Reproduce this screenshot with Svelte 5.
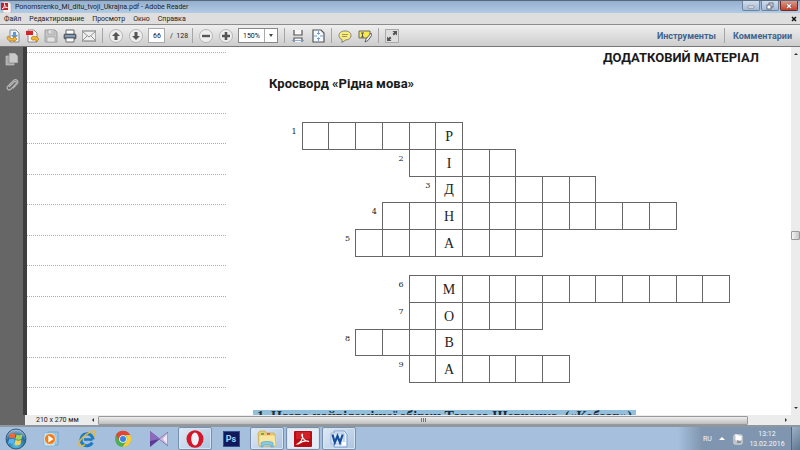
<script lang="ts">
	type Row = { no: number; start: number; length: number; letter: string };

	const keyColumn = 6;

	const blocks: Row[][] = [
		[
			{ no: 1, start: 1, length: 6, letter: 'Р' },
			{ no: 2, start: 5, length: 4, letter: 'І' },
			{ no: 3, start: 6, length: 6, letter: 'Д' },
			{ no: 4, start: 4, length: 11, letter: 'Н' },
			{ no: 5, start: 3, length: 7, letter: 'А' }
		],
		[
			{ no: 6, start: 5, length: 12, letter: 'М' },
			{ no: 7, start: 5, length: 5, letter: 'О' },
			{ no: 8, start: 3, length: 4, letter: 'В' },
			{ no: 9, start: 5, length: 6, letter: 'А' }
		]
	];

	const menu = ['Файл', 'Редактирование', 'Просмотр', 'Окно', 'Справка'];
	const ruledLines = Array.from({ length: 12 });

	let page = $state('66');
	let zoom = $state('150%');
</script>

<svelte:head>
	<title>Ponomsrenko_Mi_ditu_tvoji_Ukrajna.pdf - Adobe Reader</title>
</svelte:head>

<div class="screen">
	<header class="titlebar">
		<svg class="app-icon" viewBox="0 0 11 11">
			<path d="M2 0h6l2 2v9H2z" fill="#f7f1f1" stroke="#a99" stroke-width=".5" />
			<path d="M0 1h7v7H0z" fill="#c3202b" />
			<path d="M1 7c2-1 3-4 2.500-5.500C3 3 5 5.500 6.500 5.500 4.500 5 2 6 1 7z" fill="none" stroke="#fff" stroke-width=".8" />
		</svg>
		<span class="title">Ponomsrenko_Mi_ditu_tvoji_Ukrajna.pdf - Adobe Reader</span>
		<div class="window-buttons">
			<button aria-label="Свернуть">
				<svg viewBox="0 0 10 8"><rect x="2" y="4" width="6" height="2" rx=".5" fill="#fff" stroke="#667" stroke-width=".6" /></svg>
			</button>
			<button aria-label="Восстановить">
				<svg viewBox="0 0 10 8">
					<rect x="4" y="1" width="4" height="4" fill="#dde6f0" stroke="#556" stroke-width=".8" />
					<rect x="2" y="3" width="4" height="4" fill="#fff" stroke="#556" stroke-width=".8" />
				</svg>
			</button>
			<button class="close" aria-label="Закрыть">
				<svg viewBox="0 0 10 8">
					<path d="M3 2l4 4M7 2L3 6" stroke="#633" stroke-width="2.400" />
					<path d="M3 2l4 4M7 2L3 6" stroke="#fff" stroke-width="1.500" />
				</svg>
			</button>
		</div>
	</header>

	<nav class="menubar">
		{#each menu as item}
			<button>{item}</button>
		{/each}
		<button class="close-doc" aria-label="Закрыть документ">
			<svg viewBox="0 0 6 6"><path d="M1 1l4 4M5 1L1 5" stroke="#111" stroke-width="1.500" /></svg>
		</button>
	</nav>

	<div class="toolbar">
		<div class="group files">
			<button aria-label="Открыть">
				<svg viewBox="0 0 14 14">
					<path d="M4 1h6l3 3v9H4z" fill="#e8f1fa" stroke="#777" stroke-width=".8" />
					<path d="M7 3h3v3h2L8.500 10 5 6h2z" fill="#5a9bd8" />
					<path d="M1 8c0 4 4 5 7 3v2l3-3-3-3v2c-2 1-4 1-5-2z" fill="#f2b632" stroke="#a96f10" stroke-width=".6" />
				</svg>
			</button>
			<button aria-label="Создать PDF">
				<svg viewBox="0 0 14 14">
					<path d="M3 1h6l3 3v9H3z" fill="#f5f5f5" stroke="#777" stroke-width=".8" />
					<path d="M1 2h7v4H1z" fill="#d8232a" />
					<path d="M6 9c1-2 3-2 5-1v-1l3 3-3 3v-2H7z" fill="#f2b632" stroke="#a96f10" stroke-width=".6" />
				</svg>
			</button>
			<button aria-label="Сохранить" disabled>
				<svg viewBox="0 0 14 14">
					<path d="M1 1h10l2 2v10H1z" fill="#c4c4c4" stroke="#a0a0a0" />
					<path d="M4 1h6v4H4zM3 8h8v5H3z" fill="#e4e4e4" stroke="#a0a0a0" stroke-width=".7" />
					<path d="M8 2v2" stroke="#999" />
				</svg>
			</button>
			<button aria-label="Печать">
				<svg viewBox="0 0 14 14">
					<path d="M3 1h8v5H3z" fill="#fff" stroke="#555" stroke-width=".9" />
					<rect x="1" y="5" width="12" height="5" rx="1.200" fill="#5f6f80" stroke="#444" stroke-width=".7" />
					<path d="M2 7h10" stroke="#a9c7e5" />
					<path d="M3 9h8v4H3z" fill="#f8fbff" stroke="#555" stroke-width=".8" />
				</svg>
			</button>
			<button aria-label="Отправить">
				<svg viewBox="0 0 14 14">
					<path d="M0 2h14v10H0z" fill="#efefef" stroke="#777" stroke-width="1.200" />
					<path d="M1 3l6 5 6-5M1 11l4-4M13 11L9 7" fill="none" stroke="#888" stroke-width=".9" />
				</svg>
			</button>
		</div>
		<i class="sep"></i>
		<div class="group">
			<button aria-label="Предыдущая страница">
				<svg viewBox="0 0 14 14">
					<circle cx="7" cy="7" r="6.500" fill="#eee" stroke="#aaa" stroke-width=".8" />
					<path d="M7 3l4 4H8.500v4h-3V7H3z" fill="#555" />
				</svg>
			</button>
			<button aria-label="Следующая страница">
				<svg viewBox="0 0 14 14">
					<circle cx="7" cy="7" r="6.500" fill="#eee" stroke="#aaa" stroke-width=".8" />
					<path d="M7 11l4-4H8.500V3h-3v4H3z" fill="#555" />
				</svg>
			</button>
		</div>
		<input class="page-no" aria-label="Страница" bind:value={page} />
		<span class="page-total">/&nbsp; 128</span>
		<i class="sep"></i>
		<div class="group">
			<button aria-label="Уменьшить">
				<svg viewBox="0 0 14 14">
					<circle cx="7" cy="7" r="6.500" fill="#eee" stroke="#aaa" stroke-width=".8" />
					<path d="M3 7h8" stroke="#555" stroke-width="2.400" />
				</svg>
			</button>
			<button aria-label="Увеличить">
				<svg viewBox="0 0 14 14">
					<circle cx="7" cy="7" r="6.500" fill="#eee" stroke="#aaa" stroke-width=".8" />
					<path d="M3 7h8M7 3v8" stroke="#555" stroke-width="2.600" />
				</svg>
			</button>
		</div>
		<div class="zoom">
			<select aria-label="Масштаб" bind:value={zoom}>
				<option>100%</option>
				<option>150%</option>
				<option>200%</option>
			</select>
			<span class="zoom-arrow"></span>
		</div>
		<i class="sep"></i>
		<div class="group">
			<button aria-label="По ширине">
				<svg viewBox="0 0 14 14">
					<path d="M3 1v5h8V1M3 13V9h8v4" fill="#f8f8f8" stroke="#555" stroke-width="1.200" />
					<path d="M1 11.500h12M3.500 10L1.500 11.500l2 1.500M10.500 10l2 1.500-2 1.500" fill="none" stroke="#7b9cc6" stroke-width=".8" />
				</svg>
			</button>
			<button aria-label="Страница целиком">
				<svg viewBox="0 0 14 14">
					<path d="M2 1h8l3 3v9H2z" fill="#f5f8fc" stroke="#555" stroke-width="1.200" />
					<path d="M7.500 2v3M7.500 9v3M3 7h3M9 7h3M6 4l1.500 1.500L9 4M6 10l1.500-1.500L9 10" fill="none" stroke="#7b9cc6" />
				</svg>
			</button>
		</div>
		<i class="sep"></i>
		<div class="group">
			<button aria-label="Заметка">
				<svg viewBox="0 0 14 14">
					<path d="M7 2c4 0 6 2 6 4.500S11 11 7.500 11L4 13.500V10.500C2 10 1 8 1 6.500 1 4 3 2 7 2z" fill="#f7ec7d" stroke="#777" stroke-width=".9" />
					<path d="M4 5.500h6M4 7.500h5" stroke="#8a8450" stroke-width=".8" />
				</svg>
			</button>
			<button aria-label="Выделить текст">
				<svg viewBox="0 0 14 14">
					<path d="M1 2h11v7H1z" fill="#f9e94d" stroke="#666" />
					<path d="M3 4h3M4.500 4v4M3 8h3" stroke="#555" />
					<path d="M13 4l-5 6-1 3 3-1.500L14 6z" fill="#eee" stroke="#555" stroke-width=".9" />
				</svg>
			</button>
		</div>
		<i class="sep"></i>
		<button aria-label="Во весь экран">
			<svg viewBox="0 0 14 14">
				<rect x=".5" y=".5" width="13" height="13" fill="#ddd" stroke="#aaa" />
				<path d="M12 2v4.500L10.500 5 9 6.500 7.500 5 9 3.500 7.500 2zM2 12V7.500L3.500 9 5 7.500 6.500 9 5 10.500 6.500 12z" fill="#555" />
			</svg>
		</button>
		<div class="panels">
			<button>Инструменты</button>
			<i class="sep"></i>
			<button>Комментарии</button>
		</div>
	</div>

	<div class="workspace">
		<aside class="sidebar">
			<button aria-label="Эскизы страниц">
				<svg viewBox="0 0 14 14">
					<path d="M1 4h8v9H1z" fill="#aaa" stroke="#d0d0d0" stroke-width=".6" />
					<path d="M4 1h6l3 3v7H4z" fill="#c9c9c9" stroke="#777" stroke-width=".6" />
				</svg>
			</button>
			<button aria-label="Вложения">
				<svg viewBox="0 0 14 14">
					<path d="M4 9l5-5c2-1.500 3 0 2 1.500L6 11c-2 2-5 0-3.500-2.500L8 3c2.500-3 6-.5 4.500 2.500L8 10.500" fill="none" stroke="#bbb" stroke-width="1.100" />
				</svg>
			</button>
		</aside>

		<main class="document">
			<div class="ruled">
				{#each ruledLines as _}
					<i></i>
				{/each}
			</div>

			<article class="sheet">
				<p class="running-head">ДОДАТКОВИЙ МАТЕРІАЛ</p>
				<h1>Кросворд «Рідна мова»</h1>
				{#each blocks as rows}
					<div class="crossword" class:short={rows.length === 4}>
						{#each rows as row, r}
							<span class="number" style="grid-area: {r + 1} / {row.start}">{row.no}</span>
							{#each Array.from({ length: row.length }) as _, i}
								<span class="cell" style="grid-area: {r + 1} / {row.start + i + 1}">
									{row.start + i === keyColumn ? row.letter : ''}
								</span>
							{/each}
						{/each}
					</div>
				{/each}
				<p class="question"><mark>1. Назва найвідомішої збірки Тараса Шевченка. («Кобзар»)</mark></p>
			</article>
		</main>

		<div class="vscroll">
			<span class="arrow up"></span>
			<span class="thumb"></span>
			<span class="arrow down"></span>
		</div>
	</div>

	<div class="statusbar">
		<span class="page-size">210 x 270 мм</span>
		<span class="arrow left"></span>
		<div class="hthumb"><i></i><i></i><i></i></div>
		<span class="arrow right"></span>
	</div>

	<footer class="taskbar">
		<button class="start" aria-label="Пуск">
			<svg viewBox="0 0 22 22">
				<defs>
					<radialGradient id="orb" cx=".5" cy=".8" r=".8">
						<stop offset="0" stop-color="#58c6e8" />
						<stop offset=".6" stop-color="#286b9c" />
						<stop offset="1" stop-color="#b0cbe0" />
					</radialGradient>
				</defs>
				<circle cx="11" cy="11" r="10" fill="url(#orb)" stroke="#35597c" />
				<path d="M5 6c2-1 3-1 5.500 0l-1 4.500c-2-1-3.500-1-5.500 0z" fill="#ee6935" />
				<path d="M11.500 6.500c2 1 4 1 6 0l-1 4.500c-2 1-4 1-6 0z" fill="#a4d34f" />
				<path d="M4 11.500c2-1 3.500-1 5.300 0l-1 4.500c-2-1-3.300-1-5.300 0z" fill="#58b4f0" />
				<path d="M10.500 12c2 1 4 1 5.800 0l-1 4.500c-2 1-4 1-5.800 0z" fill="#ffd04b" />
			</svg>
		</button>
		<button class="task" aria-label="Проигрыватель">
			<svg viewBox="0 0 18 18">
				<path d="M6 2h10v13H6z" fill="#9dcbe7" stroke="#6ca8ce" />
				<path d="M2 3h11v13H2z" fill="#bde0f2" stroke="#78b1d2" stroke-width=".6" />
				<circle cx="8" cy="9" r="5.500" fill="#ee7d1c" stroke="#fff" stroke-width=".6" />
				<path d="M6.300 5.500L11.500 9l-5.200 3.500z" fill="#fff" />
			</svg>
		</button>
		<button class="task" aria-label="Internet Explorer">
			<svg viewBox="0 0 18 18">
				<path d="M6 9.500h8.500" stroke="#1c7cc4" stroke-width="2.600" />
				<path d="M14.300 12.500A6 6 0 1 1 15 9.500" fill="none" stroke="#1c7cc4" stroke-width="3" />
				<path d="M1.500 15.500C-2 12 10 1 16 1.500c2 .5 1.500 3 0 5M2 15.500c1 1 4 0 5-1" fill="none" stroke="#efb827" stroke-width="1.500" />
			</svg>
		</button>
		<button class="task" aria-label="Chrome">
			<svg viewBox="0 0 18 18">
				<circle cx="9" cy="9" r="8" fill="#4caf50" />
				<path d="M2 5a8 8 0 0 1 14 0H9a4 4 0 0 0-3.500 6z" fill="#e24435" />
				<path d="M16 5a8 8 0 0 1-7.500 12L12.500 11A4 4 0 0 0 11 5z" fill="#fccb3a" />
				<circle cx="9" cy="9" r="3.800" fill="#fff" />
				<circle cx="9" cy="9" r="3" fill="#3f7fe6" />
			</svg>
		</button>
		<button class="task" aria-label="KMPlayer">
			<svg viewBox="0 0 18 18">
				<path d="M0 1l10 8-10 8z" fill="#5c3c92" />
				<path d="M0 1l10 8-10 2z" fill="#8a6bbb" />
				<path d="M18 2v14l-9-7z" fill="#c6b8de" stroke="#7860a5" stroke-width=".7" />
				<path d="M17 4v10l-4-5z" fill="#eeeaf6" />
			</svg>
		</button>
		<button class="task open" aria-label="Opera">
			<svg viewBox="0 0 18 18">
				<ellipse cx="9" cy="9" rx="8.500" ry="8.800" fill="#d51626" />
				<ellipse cx="9" cy="9" rx="3.800" ry="6.500" fill="#eef2f8" />
			</svg>
		</button>
		<button class="task" aria-label="Photoshop"><span class="ps">Ps</span></button>
		<button class="task open" aria-label="Проводник">
			<svg class="wide" viewBox="0 0 20 18">
				<path d="M1 3l2-2h5l1 2h8l1 2v11H2z" fill="#edcf73" stroke="#c59d3e" stroke-width=".6" />
				<path d="M4 3h3v3H4z" fill="#5aad4e" />
				<path d="M10 3h3v3h-3z" fill="#dc5a45" />
				<path d="M2 5h16l1 11H2z" fill="#f9e6a0" stroke="#d3b25b" stroke-width=".6" />
				<path d="M4 17v-4c0-2 12-2 12 0v4h-2v-2H6v2z" fill="#86cbe8" stroke="#509fc5" stroke-width=".6" />
			</svg>
		</button>
		<button class="task open active" aria-label="Adobe Reader">
			<svg viewBox="0 0 18 18">
				<rect x="0" y="1" width="18" height="16" rx="1" fill="#b70d13" />
				<path d="M2 2h14v7H2z" fill="#cf2027" />
				<path d="M3.500 14C7 12 9 8 8.500 4.500 8 3 7.500 5 8 6c1 3 4 5.500 7 5.500-3-1.500-8 .5-11 2.500z" fill="none" stroke="#fff" stroke-width="1.100" />
			</svg>
		</button>
		<button class="task open" aria-label="Word">
			<svg viewBox="0 0 18 18">
				<path d="M4 1h10l3 3v13H4z" fill="#e7f0fb" stroke="#6b91c5" stroke-width=".8" />
				<path d="M1 3h13v11H1z" fill="#dce9f8" stroke="#86a8d4" stroke-width=".6" />
				<path d="M2.500 4.500l2.300 8L7.500 6l2.500 6.500 2.700-8" fill="none" stroke="#174f9d" stroke-width="2.200" />
				<path d="M12 12h4v3h-4z" fill="#fff" />
			</svg>
		</button>

		<div class="tray">
			<span class="lang">RU</span>
			<span class="arrow tray-up"></span>
			<svg class="flag" viewBox="0 0 10 12">
				<rect x="1" y="2" width="8" height="9" rx="1" fill="#8c9298" stroke="#eee" />
				<path d="M3 1v9M3 3c2-2 3 1 5 0v4c-2 1-3-1-5 0z" fill="#fff" stroke="#fff" />
			</svg>
			<div class="clock">
				<time>13:12</time>
				<span>13.02.2016</span>
			</div>
			<button class="show-desktop" aria-label="Показать рабочий стол"></button>
		</div>
	</footer>
</div>

<style>
	:global(body) {
		margin: 0;
	}

	.screen {
		display: flex;
		flex-direction: column;
		height: 100vh;
		overflow: hidden;
		font-family: Roboto, 'Noto Sans', sans-serif;
		font-size: 7px;
		line-height: 10px;
		color: #222;
	}

	button {
		display: flex;
		align-items: center;
		justify-content: center;
		margin: 0;
		padding: 0;
		border: none;
		background: none;
		color: inherit;
		font: inherit;
	}

	svg {
		display: block;
		width: 14px;
		height: 14px;
	}

	/* Title and menu */
	.titlebar {
		display: flex;
		align-items: center;
		flex: 0 0 13px;
		box-sizing: border-box;
		padding-left: 1px;
		border-top: 1px solid #59687a;
		background: linear-gradient(#94b0cf, #b3cbe5);
	}

	.app-icon {
		width: 11px;
		height: 11px;
		margin-right: 3px;
	}

	.title {
		flex: 1;
		white-space: nowrap;
	}

	.window-buttons {
		display: flex;
		gap: 1px;
		align-self: flex-start;
		margin-right: 2px;
	}

	.window-buttons button {
		width: 18px;
		height: 10px;
		box-sizing: border-box;
		border: 1px solid #6d829b;
		border-top: none;
		border-radius: 0 0 2px 2px;
		background: linear-gradient(#d0dded, #a4bad4);
	}

	.window-buttons .close {
		border-color: #6c2c26;
		background: linear-gradient(#dc9a8c, #c4412b);
	}

	.window-buttons svg {
		width: 10px;
		height: 8px;
	}

	.menubar {
		display: flex;
		align-items: center;
		flex: 0 0 11px;
		gap: 8px;
		padding: 0 3px 0 4px;
		background: #dedede;
	}

	.close-doc {
		margin-left: auto;
	}

	.close-doc svg {
		width: 6px;
		height: 6px;
	}

	/* Toolbar */
	.toolbar {
		display: flex;
		align-items: center;
		flex: 0 0 23px;
		box-sizing: border-box;
		padding: 0 8px 0 6px;
		border-top: 1px solid #8d8d8d;
		border-bottom: 1px solid #777;
		background: linear-gradient(#efefef, #cdcdcd);
	}

	.group {
		display: flex;
		gap: 6px;
	}

	.files {
		gap: 5px;
	}

	.sep {
		width: 1px;
		height: 15px;
		margin: 0 6px;
		background: #a5a5a5;
	}

	.page-no {
		box-sizing: border-box;
		width: 17px;
		height: 15px;
		margin-left: 5px;
		padding: 0 0 0 4px;
		border: 1px solid #aaa;
		background: #fff;
		color: #111;
		font: inherit;
	}

	.page-total {
		width: 16px;
		margin-left: 5px;
		white-space: nowrap;
	}

	.zoom {
		display: flex;
		align-items: center;
		margin-left: 5px;
		height: 15px;
		box-sizing: border-box;
		border: 1px solid #888;
		background: #fff;
	}

	.zoom select {
		width: 26px;
		height: 13px;
		padding: 0 0 0 4px;
		border: none;
		border-right: 1px solid #aaa;
		border-radius: 0;
		appearance: none;
		background: #fff;
		color: #111;
		font: inherit;
	}

	.zoom-arrow {
		margin: 0 4px;
		border: 2px solid transparent;
		border-top: 3px solid #444;
		border-bottom: none;
	}

	.panels {
		display: flex;
		align-items: center;
		margin-left: auto;
		color: #3f648f;
		font-size: 9px;
		font-weight: 700;
	}

	.panels .sep {
		margin: 0 8px;
	}

	/* Document area */
	.workspace {
		display: flex;
		flex: 1;
		min-height: 0;
		overflow: hidden;
	}

	.sidebar {
		display: flex;
		flex-direction: column;
		align-items: center;
		gap: 12px;
		flex: 0 0 23px;
		padding-top: 5px;
		border-right: 4px solid #3e3e3e;
		background: #666;
	}

	.document {
		display: flex;
		flex: 1;
		overflow: hidden;
		background: #fff;
	}

	.ruled {
		display: flex;
		flex-direction: column;
		justify-content: space-between;
		flex: 0 0 199px;
		height: 336px;
		padding-top: 5px;
	}

	.ruled i {
		border-top: 1px dotted #aaa;
	}

	.sheet {
		flex: 1;
		padding-left: 27px;
	}

	p,
	h1 {
		margin: 0;
	}

	.running-head,
	h1 {
		color: #1a1a1a;
		font-size: 13px;
		font-weight: 700;
		line-height: 18px;
		white-space: nowrap;
	}

	.running-head {
		padding: 2px 32px 0 0;
		text-align: right;
	}

	h1 {
		padding: 8px 0 0 16px;
	}

	.crossword {
		display: grid;
		grid-template-columns: repeat(17, 1fr);
		grid-template-rows: repeat(5, 1fr);
		width: 454px;
		height: 134px;
		margin: 29px 0 0 22px;
		font-family: 'Liberation Serif', serif;
	}

	.crossword.short {
		grid-template-rows: repeat(4, 1fr);
		height: 107px;
		margin-top: 19px;
	}

	.number {
		padding: 5px 5px 0 0;
		font-family: 'DejaVu Serif', serif;
		font-size: 8px;
		text-align: right;
	}

	.cell {
		display: flex;
		align-items: center;
		justify-content: center;
		min-width: 0;
		margin: 0 -1px -1px 0;
		padding-top: 2px;
		border: 1px solid #666;
		font-size: 14px;
	}

	.question {
		margin-top: 28px;
		font-family: 'Liberation Serif', serif;
		font-size: 14px;
		font-weight: 700;
		line-height: 14px;
		white-space: nowrap;
	}

	mark {
		display: inline-block;
		padding: 0 4px;
		background: #92bfdb;
		color: #1c2c38;
	}

	/* Scroll bars */
	.vscroll {
		display: flex;
		flex-direction: column;
		align-items: center;
		flex: 0 0 9px;
		padding: 4px 0;
		background: #ececec;
	}

	.thumb {
		width: 7px;
		height: 7px;
		margin: 176px 0 auto;
		border: 1px solid #999;
		border-radius: 1px;
		background: linear-gradient(90deg, #f4f4f4, #c6c6c6);
	}

	.arrow {
		width: 0;
		height: 0;
		border: 2px solid transparent;
	}

	.up {
		border-bottom-color: #333;
	}

	.down {
		border-top-color: #333;
	}

	.left {
		border-right-color: #333;
	}

	.right {
		border-left-color: #333;
	}

	.statusbar {
		display: flex;
		align-items: center;
		flex: 0 0 11px;
		box-sizing: border-box;
		padding: 0 11px 0 25px;
		border-bottom: 2px solid #8f979f;
		background: linear-gradient(90deg, #666 25px, #ececec 25px);
	}

	.page-size {
		width: 54px;
		padding-left: 11px;
		white-space: nowrap;
	}

	.hthumb {
		display: flex;
		align-items: center;
		justify-content: center;
		gap: 1px;
		flex: 1;
		height: 7px;
		margin: 0 37px 0 4px;
		border: 1px solid #999;
		border-radius: 1px;
		background: linear-gradient(#eee, #bdbdbd);
	}

	.hthumb i {
		width: 1px;
		height: 4px;
		background: #777;
	}

	/* Taskbar */
	.taskbar {
		display: flex;
		align-items: center;
		gap: 2px;
		flex: 0 0 23px;
		background: #a5bfdd;
	}

	.start {
		width: 32px;
	}

	.start svg {
		width: 22px;
		height: 22px;
	}

	.task {
		width: 34px;
		height: 23px;
		box-sizing: border-box;
		border: 1px solid transparent;
		border-radius: 2px;
	}

	.task svg {
		width: 18px;
		height: 18px;
	}

	.task .wide {
		width: 20px;
	}

	.task.open {
		border-color: #7790ae;
		background: linear-gradient(135deg, #dfe9f5, #adc5e0);
		box-shadow: inset 0 0 0 1px #d7e4f2;
	}

	.task.active {
		background: #e4edf7;
	}

	.ps {
		width: 15px;
		border: 1px solid #36518f;
		background: #10195c;
		color: #9fd2f7;
		font-size: 9px;
		font-weight: 700;
		line-height: 14px;
	}

	.tray {
		display: flex;
		align-items: center;
		align-self: stretch;
		margin-left: auto;
		padding-left: 25px;
		background: linear-gradient(90deg, #a5bfdd, #8096b0 24px);
		color: #f2f6fa;
	}

	.lang {
		width: 16px;
	}

	.tray-up {
		border-width: 3px;
		border-top-width: 0;
		border-bottom-color: #fff;
	}

	.flag {
		width: 10px;
		height: 12px;
		margin-left: 8px;
	}

	.clock {
		display: flex;
		flex-direction: column;
		align-items: center;
		width: 48px;
	}

	.show-desktop {
		align-self: stretch;
		width: 9px;
		border-left: 1px solid #52667c;
		background: linear-gradient(135deg, #9db1c6, #5e7791);
	}
</style>
